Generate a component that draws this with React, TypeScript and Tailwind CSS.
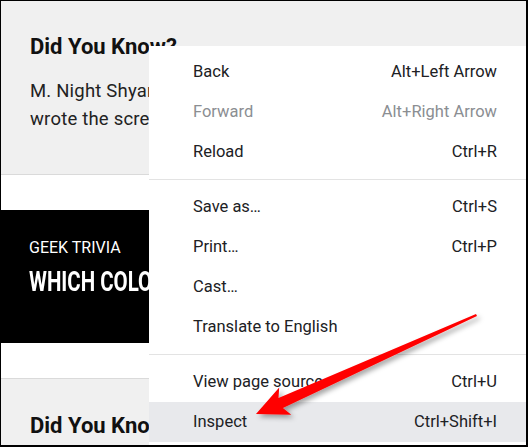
import React from "react";

type MenuItem = {
  label: string;
  shortcut?: string;
  disabled?: boolean;
  active?: boolean;
};

const groups: MenuItem[][] = [
  [
    { label: "Back", shortcut: "Alt+Left Arrow" },
    { label: "Forward", shortcut: "Alt+Right Arrow", disabled: true },
    { label: "Reload", shortcut: "Ctrl+R" },
  ],
  [
    { label: "Save as…", shortcut: "Ctrl+S" },
    { label: "Print…", shortcut: "Ctrl+P" },
    { label: "Cast…" },
    { label: "Translate to English" },
  ],
  [
    { label: "View page source", shortcut: "Ctrl+U" },
    { label: "Inspect", shortcut: "Ctrl+Shift+I", active: true },
  ],
];

const font = { fontFamily: "Roboto, 'Noto Sans', sans-serif" };

const ContextMenu = () => {
  return (
    <div className="absolute top-[45px] left-[148px] right-0 bottom-0 bg-white pt-[6px] text-[16.5px]">
      {groups.map((group, gi) => (
        <div key={gi}>
          {gi > 0 && (
            <div className="py-[7px]">
              <div className="h-px bg-[#e3e3e3]" />
            </div>
          )}
          {group.map((item) => (
            <div
              key={item.label}
              className={`flex h-10 items-center justify-between pl-[44px] pr-[29px] leading-6 ${
                item.active ? "bg-[#e8e9ec]" : ""
              } ${item.disabled ? "text-[#8b8e92]" : "text-[#202124]"}`}
            >
              <span>{item.label}</span>
              {item.shortcut && <span>{item.shortcut}</span>}
            </div>
          ))}
        </div>
      ))}
    </div>
  );
};

const Arrow = () => (
  <svg
    className="absolute left-[-1px] top-[-1px] pointer-events-none"
    width={528}
    height={447}
    viewBox="0 0 528 447"
  >
    <defs>
      <filter id="arrowShadow" x="-20%" y="-20%" width="140%" height="140%">
        <feDropShadow dx="3" dy="3" stdDeviation="2.5" floodColor="#000" floodOpacity="0.35" />
      </filter>
    </defs>
    <polygon
      points="476,314 477,316 282.9,408.1 291.3,414.8 256,414 279.2,387.4 278.5,398.1"
      fill="#ff0000"
      filter="url(#arrowShadow)"
    />
  </svg>
);

export default function App() {
  return (
    <div
      className="relative w-[528px] h-[447px] overflow-hidden bg-white border-l border-t border-r-2 border-b-2 border-black"
      style={font}
    >
      <div className="h-[174px] bg-[#f0f0f0] border-b border-[#dadada] pl-[29px] pt-[32px]">
        <h2 className="text-[22px] font-bold leading-7 text-[#111]">Did You Know?</h2>
        <p className="mt-[16px] text-[18.5px] tracking-[0.2px] leading-7 text-[#222]">
          M. Night Shyamalan, the director of The Sixth Sense,
          <br />
          wrote the screenplay for the movie Stuart Little.
        </p>
      </div>

      <div className="mt-[35px] h-[133px] bg-black pl-[28px] pt-[26px] text-white">
        <div className="text-[16px] leading-6">GEEK TRIVIA</div>
        <div className="mt-[6px] leading-8">
          <span className="inline-block origin-left scale-x-[0.73] whitespace-nowrap text-[28px] font-bold">
            WHICH COLOR IS THE MOST COMMON?
          </span>
        </div>
      </div>

      <div className="mt-[35px] h-[100px] bg-[#f0f0f0] border-t border-[#dadada] pl-[29px] pt-[33px]">
        <h2 className="text-[22px] font-bold leading-7 text-[#111]">Did You Know?</h2>
      </div>

      <ContextMenu />
      <Arrow />
    </div>
  );
}
